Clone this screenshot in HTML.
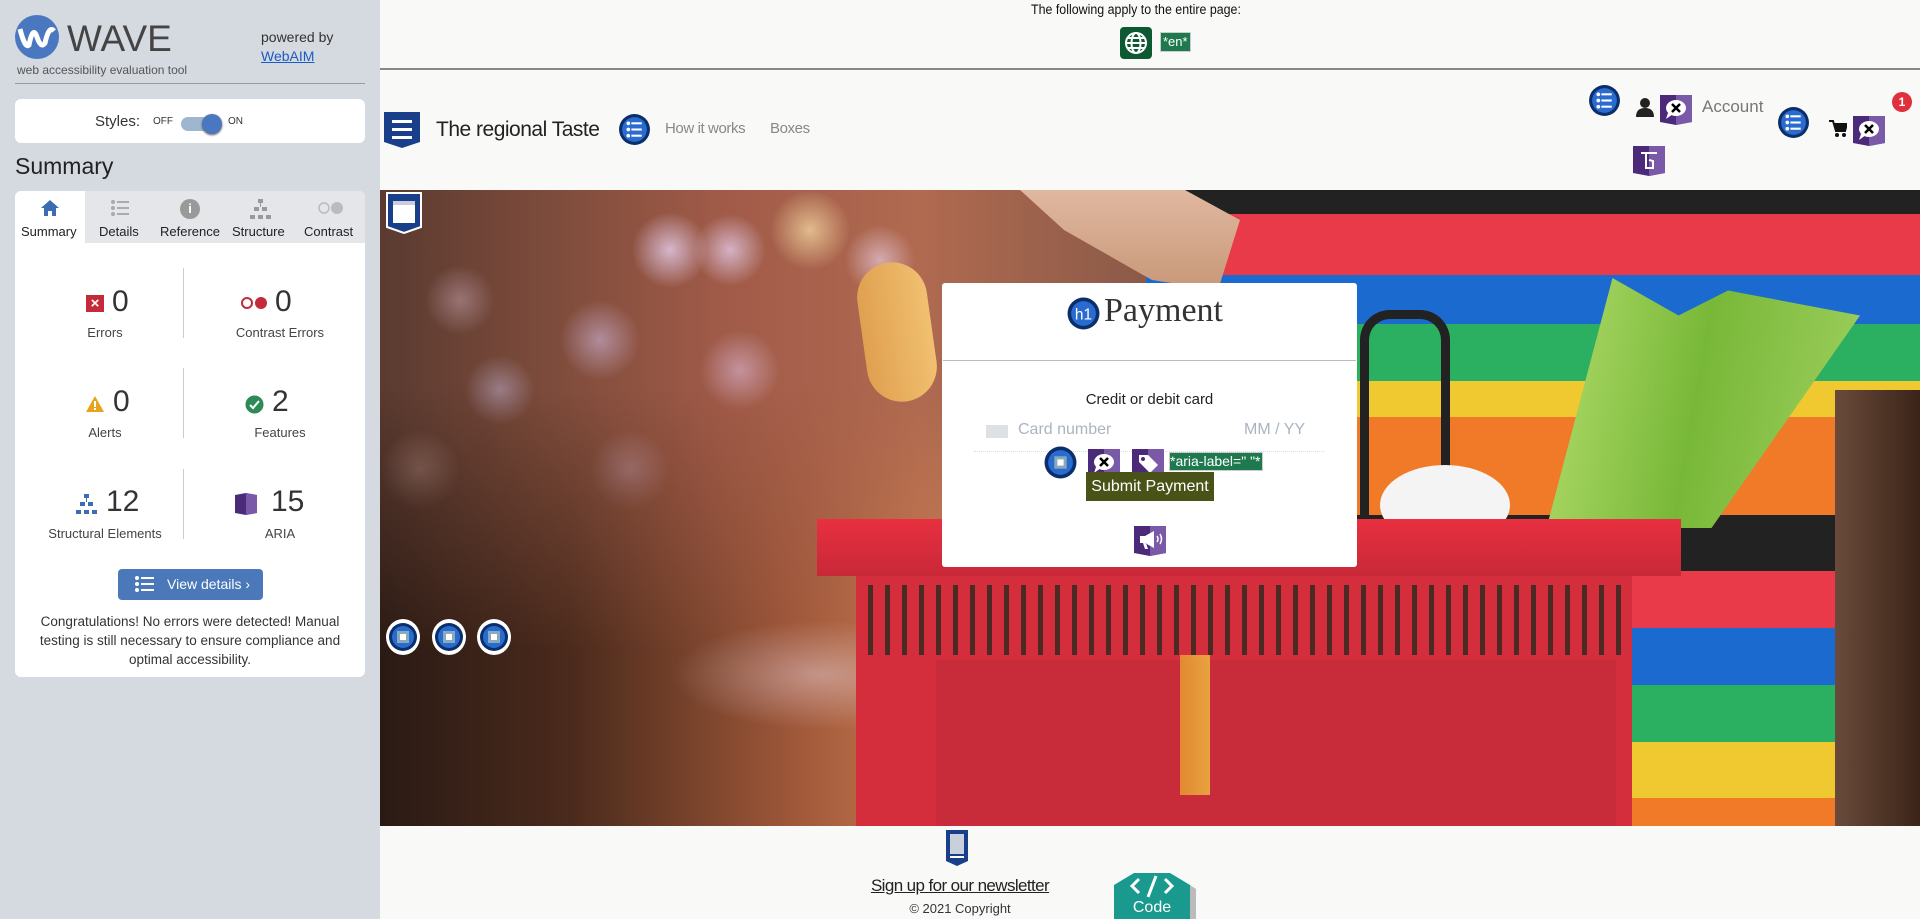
<!DOCTYPE html>
<html><head><meta charset="utf-8"><style>
*{margin:0;padding:0;box-sizing:border-box}
body{width:1920px;height:919px;overflow:hidden;position:relative;font-family:"Liberation Sans",sans-serif;background:#f9faf8}
.a{position:absolute}
#side{left:0;top:0;width:380px;height:919px;background:#d5d9e0;color:#333}
.c{text-align:center}
.lbl{font-size:13px;color:#444}
.num{font-size:30px;color:#333}
</style></head><body>
<div id="side" class="a">
  <svg class="a" style="left:15px;top:15px" width="44" height="44" viewBox="0 0 44 44"><circle cx="22" cy="22" r="22" fill="#4a78c0"/><path d="M5 14 Q10 34 14 30 Q18 10 22 22 Q26 34 30 28 Q34 10 39 16" fill="none" stroke="#fff" stroke-width="5"/></svg>
  <div class="a" style="left:67px;top:18px;font-size:37px;color:#444">WAVE</div>
  <div class="a" style="left:17px;top:63px;font-size:12px;color:#555">web accessibility evaluation tool</div>
  <div class="a" style="left:261px;top:29px;font-size:14px;color:#333">powered by</div>
  <div class="a" style="left:261px;top:48px;font-size:14px;color:#1a5bc4;text-decoration:underline">WebAIM</div>
  <div class="a" style="left:15px;top:83px;width:350px;height:1px;background:#999"></div>
  <div class="a" style="left:15px;top:99px;width:350px;height:44px;background:#fff;border-radius:6px"></div>
  <div class="a" style="left:95px;top:113px;font-size:15px">Styles:</div>
  <div class="a" style="left:153px;top:116px;font-size:10px">OFF</div>
  <div class="a" style="left:181px;top:117px;width:40px;height:14px;border-radius:7px;background:#9fb6cf"></div>
  <div class="a" style="left:202px;top:114px;width:20px;height:20px;border-radius:50%;background:#4a78c0;box-shadow:0 1px 2px #555"></div>
  <div class="a" style="left:228px;top:116px;font-size:10px">ON</div>
  <div class="a" style="left:15px;top:153px;font-size:23px;color:#222">Summary</div>
  <div class="a" style="left:15px;top:191px;width:350px;height:486px;background:#fff;border-radius:6px;overflow:hidden">
    <div class="a" style="left:70px;top:0;width:280px;height:52px;background:#e4e6ea"></div>
  </div>
  <svg class="a" style="left:40px;top:199px" width="20" height="18" viewBox="0 0 20 18"><path d="M10 1 L1 9 H4 V17 H8 V12 H12 V17 H16 V9 H19Z" fill="#3b6db5"/></svg>
  <svg class="a" style="left:110px;top:199px" width="20" height="18"><g fill="#aaa"><circle cx="3" cy="3" r="2"/><circle cx="3" cy="9" r="2"/><circle cx="3" cy="15" r="2"/><rect x="7" y="2" width="12" height="2"/><rect x="7" y="8" width="12" height="2"/><rect x="7" y="14" width="12" height="2"/></g></svg>
  <div class="a" style="left:180px;top:199px;width:20px;height:20px;border-radius:50%;background:#999;color:#fff;font-size:13px;text-align:center;line-height:20px;font-weight:bold">i</div>
  <svg class="a" style="left:250px;top:199px" width="21" height="20"><g fill="#999"><rect x="8" y="0" width="5" height="4"/><rect x="4" y="8" width="5" height="4"/><rect x="12" y="8" width="5" height="4"/><rect x="0" y="16" width="5" height="4"/><rect x="8" y="16" width="5" height="4"/><rect x="16" y="16" width="5" height="4"/><rect x="10" y="4" width="1" height="4"/></g></svg>
  <svg class="a" style="left:318px;top:201px" width="26" height="14"><circle cx="6" cy="7" r="5" fill="none" stroke="#bbb" stroke-width="1.5"/><circle cx="19" cy="7" r="6" fill="#bbb"/></svg>
  <div class="a lbl" style="left:21px;top:224px;color:#222">Summary</div>
  <div class="a lbl" style="left:99px;top:224px;color:#222">Details</div>
  <div class="a lbl" style="left:160px;top:224px;color:#222">Reference</div>
  <div class="a lbl" style="left:232px;top:224px;color:#222">Structure</div>
  <div class="a lbl" style="left:304px;top:224px;color:#222">Contrast</div>
  <div class="a" style="left:183px;top:268px;width:1px;height:70px;background:#ccc"></div>
  <div class="a" style="left:183px;top:368px;width:1px;height:70px;background:#ccc"></div>
  <div class="a" style="left:183px;top:469px;width:1px;height:70px;background:#ccc"></div>
  <div class="a" style="left:86px;top:295px;width:18px;height:17px;background:#c32b3a;color:#fff;font-size:15px;line-height:17px;text-align:center;font-weight:bold">×</div>
  <div class="a num" style="left:112px;top:285px">0</div>
  <div class="a lbl c" style="left:45px;top:325px;width:120px">Errors</div>
  <svg class="a" style="left:241px;top:296px" width="27" height="14"><circle cx="6" cy="7" r="5" fill="none" stroke="#c32b3a" stroke-width="2"/><circle cx="20" cy="7" r="6" fill="#c32b3a"/></svg>
  <div class="a num" style="left:275px;top:285px">0</div>
  <div class="a lbl c" style="left:205px;top:325px;width:150px">Contrast Errors</div>
  <svg class="a" style="left:85px;top:395px" width="20" height="18"><path d="M10 1 L19 17 H1Z" fill="#e8a21c"/><rect x="9" y="6" width="2" height="6" fill="#fff"/><rect x="9" y="13" width="2" height="2" fill="#fff"/></svg>
  <div class="a num" style="left:113px;top:385px">0</div>
  <div class="a lbl c" style="left:45px;top:425px;width:120px">Alerts</div>
  <svg class="a" style="left:245px;top:395px" width="19" height="19"><circle cx="9.5" cy="9.5" r="9" fill="#2d8a57"/><path d="M5 10 L8 13 L14 6" fill="none" stroke="#fff" stroke-width="2"/></svg>
  <div class="a num" style="left:272px;top:385px">2</div>
  <div class="a lbl c" style="left:205px;top:425px;width:150px">Features</div>
  <svg class="a" style="left:76px;top:494px" width="21" height="20"><g fill="#3b6db5"><rect x="8" y="0" width="5" height="4"/><rect x="4" y="8" width="5" height="4"/><rect x="12" y="8" width="5" height="4"/><rect x="0" y="16" width="5" height="4"/><rect x="8" y="16" width="5" height="4"/><rect x="16" y="16" width="5" height="4"/><rect x="10" y="4" width="1" height="4"/></g></svg>
  <div class="a num" style="left:106px;top:485px">12</div>
  <div class="a lbl c" style="left:30px;top:526px;width:150px">Structural Elements</div>
  <svg class="a" style="left:234px;top:492px" width="24" height="24"><path d="M1 3 L12 1 L23 3 V21 L12 23 L1 21Z" fill="#4b2a7a"/><path d="M12 1 L23 3 V21 L12 23Z" fill="#7a5aa8"/></svg>
  <div class="a num" style="left:271px;top:485px">15</div>
  <div class="a lbl c" style="left:205px;top:526px;width:150px">ARIA</div>
  <div class="a" style="left:118px;top:569px;width:145px;height:31px;background:#4a78b9;border-radius:4px"></div>
  <svg class="a" style="left:135px;top:576px" width="19" height="16"><g fill="#fff"><circle cx="2" cy="2" r="2"/><circle cx="2" cy="8" r="2"/><circle cx="2" cy="14" r="2"/><rect x="6" y="1" width="13" height="2"/><rect x="6" y="7" width="13" height="2"/><rect x="6" y="13" width="13" height="2"/></g></svg>
  <div class="a" style="left:167px;top:576px;font-size:14px;color:#fff">View details ›</div>
  <div class="a c" style="left:22px;top:612px;width:336px;font-size:13.5px;line-height:19px;color:#333">Congratulations! No errors were detected! Manual testing is still necessary to ensure compliance and optimal accessibility.</div>
</div>

<!-- top -->
<div class="a" style="left:1031px;top:2px;font-size:13.5px;color:#111;transform:scaleX(.92);transform-origin:0 0">The following apply to the entire page:</div>
<div class="a" style="left:1120px;top:27px;width:32px;height:32px;background:#0d5a32;border-radius:4px"></div>
<svg class="a" style="left:1124px;top:31px" width="24" height="24" viewBox="0 0 24 24" fill="none" stroke="#fff" stroke-width="2"><circle cx="12" cy="12" r="10"/><ellipse cx="12" cy="12" rx="4.5" ry="10"/><path d="M2 12 H22 M4 7 H20 M4 17 H20"/></svg>
<div class="a" style="left:1161px;top:33px;height:18px;padding:0 2px;background:#1e7a4e;color:#fff;font-size:13px;line-height:18px;outline:1px solid #ccc">*en*</div>
<div class="a" style="left:380px;top:68px;width:1540px;height:2px;background:#888"></div>

<!-- nav -->
<svg class="a" style="left:383px;top:111px" width="38" height="38" viewBox="0 0 38 38"><path d="M1 1 H37 V31 L19 37 L1 31Z" fill="#1a3f8a"/><rect x="9" y="9" width="20" height="3" fill="#fff"/><rect x="9" y="17" width="20" height="3" fill="#fff"/><rect x="9" y="25" width="20" height="3" fill="#fff"/></svg>
<div class="a" style="left:436px;top:118px;font-size:21px;color:#222;letter-spacing:-.5px">The regional Taste</div>
<svg class="a" style="left:618px;top:113px" width="33" height="33" viewBox="0 0 32 32"><circle cx="16" cy="16" r="15" fill="#0b2f6a"/><circle cx="16" cy="16" r="12" fill="#2a6bd0"/><g fill="#fff"><circle cx="10" cy="10" r="1.8"/><circle cx="10" cy="16" r="1.8"/><circle cx="10" cy="22" r="1.8"/><rect x="13" y="9" width="10" height="2"/><rect x="13" y="15" width="10" height="2"/><rect x="13" y="21" width="10" height="2"/></g></svg>
<div class="a" style="left:665px;top:120px;font-size:15px;color:#888;letter-spacing:-.4px">How it works</div>
<div class="a" style="left:770px;top:120px;font-size:15px;color:#888;letter-spacing:-.4px">Boxes</div>

<svg class="a" style="left:1588px;top:84px" width="33" height="33" viewBox="0 0 32 32"><circle cx="16" cy="16" r="15" fill="#0b2f6a"/><circle cx="16" cy="16" r="12" fill="#2a6bd0"/><g fill="#fff"><circle cx="10" cy="10" r="1.8"/><circle cx="10" cy="16" r="1.8"/><circle cx="10" cy="22" r="1.8"/><rect x="13" y="9" width="10" height="2"/><rect x="13" y="15" width="10" height="2"/><rect x="13" y="21" width="10" height="2"/></g></svg>
<svg class="a" style="left:1635px;top:97px" width="20" height="20"><circle cx="10" cy="6" r="5" fill="#222"/><path d="M1 20 Q1 11 10 11 Q19 11 19 20Z" fill="#222"/></svg>
<svg class="a" style="left:1660px;top:93px" width="32" height="32" viewBox="0 0 32 32"><path d="M0 2 H32 V29 L16 32 L0 29Z" fill="#4b2a7a"/><path d="M16 2 H32 V29 L16 32Z" fill="#7a5aa8"/><ellipse cx="16" cy="15" rx="10" ry="8" fill="#fff"/><path d="M8 20 L6 26 L13 21Z" fill="#fff"/><path d="M12 11 L20 19 M20 11 L12 19" stroke="#000" stroke-width="2.5"/></svg>
<div class="a" style="left:1702px;top:97px;font-size:17px;color:#777">Account</div>
<svg class="a" style="left:1633px;top:144px" width="32" height="32" viewBox="0 0 32 32"><path d="M0 2 H32 V29 L16 32 L0 29Z" fill="#4b2a7a"/><path d="M16 2 H32 V29 L16 32Z" fill="#7a5aa8"/><path d="M8 9 H24 M13 9 V16 M13 16 V24 L20 24 V17 L16 16" fill="none" stroke="#fff" stroke-width="2"/></svg>
<svg class="a" style="left:1777px;top:106px" width="33" height="33" viewBox="0 0 32 32"><circle cx="16" cy="16" r="15" fill="#0b2f6a"/><circle cx="16" cy="16" r="12" fill="#2a6bd0"/><g fill="#fff"><circle cx="10" cy="10" r="1.8"/><circle cx="10" cy="16" r="1.8"/><circle cx="10" cy="22" r="1.8"/><rect x="13" y="9" width="10" height="2"/><rect x="13" y="15" width="10" height="2"/><rect x="13" y="21" width="10" height="2"/></g></svg>
<svg class="a" style="left:1829px;top:120px" width="18" height="17"><path d="M0 1 H4 L7 11 H16 L18 4 H5" fill="none" stroke="#111" stroke-width="2"/><rect x="6" y="5" width="11" height="5" fill="#111"/><circle cx="8" cy="15" r="2" fill="#111"/><circle cx="15" cy="15" r="2" fill="#111"/></svg>
<svg class="a" style="left:1853px;top:114px" width="32" height="32" viewBox="0 0 32 32"><path d="M0 2 H32 V29 L16 32 L0 29Z" fill="#4b2a7a"/><path d="M16 2 H32 V29 L16 32Z" fill="#7a5aa8"/><ellipse cx="16" cy="15" rx="10" ry="8" fill="#fff"/><path d="M8 20 L6 26 L13 21Z" fill="#fff"/><path d="M12 11 L20 19 M20 11 L12 19" stroke="#000" stroke-width="2.5"/></svg>
<div class="a" style="left:1892px;top:92px;width:20px;height:20px;border-radius:50%;background:#e0303d;color:#fff;font-size:12px;font-weight:bold;text-align:center;line-height:20px">1</div>

<!-- hero -->
<div class="a" style="left:380px;top:190px;width:1540px;height:636px;overflow:hidden;background:linear-gradient(90deg,#5a3a30 0%,#7a4a3a 10%,#a05a48 22%,#b06a50 35%,#8a5a48 50%,#9a6a58 60%)">
  <div class="a" style="left:0;top:0;width:720px;height:500px;background:
    radial-gradient(circle at 290px 60px,rgba(235,215,250,.75) 0,transparent 38px),
    radial-gradient(circle at 350px 60px,rgba(235,215,250,.7) 0,transparent 36px),
    radial-gradient(circle at 430px 40px,rgba(250,225,170,.7) 0,transparent 40px),
    radial-gradient(circle at 500px 70px,rgba(240,215,240,.6) 0,transparent 35px),
    radial-gradient(circle at 220px 150px,rgba(210,190,230,.55) 0,transparent 40px),
    radial-gradient(circle at 80px 110px,rgba(220,190,210,.4) 0,transparent 35px),
    radial-gradient(circle at 120px 200px,rgba(200,190,230,.45) 0,transparent 35px),
    radial-gradient(circle at 360px 180px,rgba(230,200,240,.5) 0,transparent 40px),
    radial-gradient(circle at 40px 280px,rgba(230,190,180,.35) 0,transparent 40px),
    radial-gradient(circle at 250px 280px,rgba(220,190,220,.4) 0,transparent 40px)"></div>
  <div class="a" style="left:0;top:200px;width:760px;height:436px;background:linear-gradient(90deg,#2a1a14 0,#4a2a1c 25%,#a0583a 55%,#d88a5a 80%,rgba(220,140,90,0) 100%);-webkit-mask-image:linear-gradient(180deg,transparent 0,#000 60%);mask-image:linear-gradient(180deg,transparent 0,#000 60%)"></div>
  <div class="a" style="left:290px;top:430px;width:300px;height:110px;background:radial-gradient(ellipse,rgba(235,215,225,.45),transparent 70%)"></div>
  <!-- shirt stripes -->
  <div class="a" style="left:766px;top:0;width:774px;height:636px;background:linear-gradient(180deg,#222 0 24px,#e83a48 24px 85px,#1a6ad0 85px 134px,#2ab060 134px 191px,#f0c830 191px 227px,#f07a28 227px 325px,#222 325px 381px,#e83a48 381px 438px,#1a6ad0 438px 495px,#2ab060 495px 552px,#f0c830 552px 608px,#f07a28 608px 636px)"></div>
  <!-- arm -->
  <div class="a" style="left:640px;top:0;width:220px;height:100px;background:linear-gradient(180deg,#e0b8a0,#c89878);clip-path:polygon(0 0,75% 0,100% 30%,90% 100%,60% 90%,20% 40%)"></div>
  <div class="a" style="left:1455px;top:200px;width:85px;height:436px;background:linear-gradient(90deg,#6a4a3a,#3a2418)"></div>
  <!-- bread -->
  <div class="a" style="left:482px;top:72px;width:70px;height:140px;border-radius:35px;background:linear-gradient(90deg,#e0a050,#f0c070);transform:rotate(-8deg)"></div>
  <!-- handle -->
  <div class="a" style="left:980px;top:120px;width:90px;height:210px;border:9px solid #222;border-bottom:none;border-radius:30px 30px 0 0"></div>
  <div class="a" style="left:1000px;top:275px;width:130px;height:80px;border-radius:50%;background:#f4f4f4"></div>
  <!-- celery -->
  <div class="a" style="left:1150px;top:88px;width:330px;height:250px;background:linear-gradient(100deg,#b8e070,#78b838 50%,#a0d060);clip-path:polygon(25% 0,45% 15%,60% 5%,100% 15%,55% 100%,5% 100%)"></div>
  <!-- basket -->
  <div class="a" style="left:437px;top:329px;width:864px;height:57px;background:linear-gradient(180deg,#e83040,#c82838)"></div>
  <div class="a" style="left:476px;top:386px;width:776px;height:250px;background:#d42e3c"></div>
  <div class="a" style="left:476px;top:395px;width:776px;height:70px;background:repeating-linear-gradient(90deg,#d42e3c 0 12px,#4a2a22 12px 17px)"></div>
  <div class="a" style="left:556px;top:470px;width:680px;height:166px;background:#c82c3a"></div>
  <div class="a" style="left:800px;top:465px;width:30px;height:140px;background:linear-gradient(90deg,#e8a030,#f0c040);opacity:.8"></div>
</div>
<svg class="a" style="left:386px;top:192px" width="36" height="42" viewBox="0 0 36 42"><path d="M1 1 H35 V35 L18 41 L1 35Z" fill="#1a3f8a" stroke="#fff" stroke-width="2"/><rect x="7" y="9" width="22" height="22" fill="#fff"/><rect x="7" y="9" width="22" height="4" fill="#ccd"/></svg>
<svg class="a" style="left:385px;top:619px" width="148" height="37"><g><ellipse cx="18" cy="18" rx="17" ry="18" fill="#fff"/><circle cx="18" cy="18" r="14" fill="#0b2f6a"/><circle cx="18" cy="18" r="11" fill="#2a6bd0"/><rect x="12" y="12" width="12" height="12" fill="#8ab"/><rect x="15" y="15" width="6" height="6" fill="#fff"/></g><g transform="translate(46 0)"><ellipse cx="18" cy="18" rx="17" ry="18" fill="#fff"/><circle cx="18" cy="18" r="14" fill="#0b2f6a"/><circle cx="18" cy="18" r="11" fill="#2a6bd0"/><rect x="12" y="12" width="12" height="12" fill="#8ab"/><rect x="15" y="15" width="6" height="6" fill="#fff"/></g><g transform="translate(91 0)"><ellipse cx="18" cy="18" rx="17" ry="18" fill="#fff"/><circle cx="18" cy="18" r="14" fill="#0b2f6a"/><circle cx="18" cy="18" r="11" fill="#2a6bd0"/><rect x="12" y="12" width="12" height="12" fill="#8ab"/><rect x="15" y="15" width="6" height="6" fill="#fff"/></g></svg>

<!-- card -->
<div class="a" style="left:942px;top:283px;width:415px;height:284px;background:#fff;border-radius:3px"></div>
<div class="a" style="left:943px;top:360px;width:413px;height:1px;background:#bbb"></div>
<svg class="a" style="left:1067px;top:297px" width="33" height="33" viewBox="0 0 32 32"><circle cx="16" cy="16" r="15.5" fill="#0b2f6a"/><circle cx="16" cy="16" r="12" fill="#2a6bd0"/><text x="16" y="22" fill="#fff" font-size="15" text-anchor="middle" font-family="Liberation Sans">h1</text></svg>
<div class="a" style="left:1104px;top:292px;font-family:'Liberation Serif',serif;font-size:34px;color:#333">Payment</div>
<div class="a c" style="left:942px;top:391px;width:415px;font-size:15px;color:#222">Credit or debit card</div>
<div class="a" style="left:986px;top:425px;width:22px;height:13px;background:#dde0e4"></div>
<div class="a" style="left:1018px;top:421px;font-size:16px;color:#aab4c0">Card number</div>
<div class="a" style="left:1244px;top:421px;font-size:16px;color:#aab4c0">MM / YY</div>
<div class="a" style="left:974px;top:451px;width:350px;border-top:1px dotted #ddd"></div>
<svg class="a" style="left:1044px;top:446px" width="33" height="33" viewBox="0 0 32 32"><circle cx="16" cy="16" r="15.5" fill="#0b2f6a"/><circle cx="16" cy="16" r="12" fill="#2a6bd0"/><rect x="10" y="10" width="12" height="12" fill="#8ab"/><rect x="13" y="13" width="6" height="6" fill="#fff"/></svg>
<svg class="a" style="left:1088px;top:447px" width="32" height="32" viewBox="0 0 32 32"><path d="M0 2 H32 V29 L16 32 L0 29Z" fill="#4b2a7a"/><path d="M16 2 H32 V29 L16 32Z" fill="#7a5aa8"/><ellipse cx="16" cy="15" rx="10" ry="8" fill="#fff"/><path d="M8 20 L6 26 L13 21Z" fill="#fff"/><path d="M12 11 L20 19 M20 11 L12 19" stroke="#000" stroke-width="2.5"/></svg>
<svg class="a" style="left:1132px;top:447px" width="32" height="32" viewBox="0 0 32 32"><path d="M0 2 H32 V29 L16 32 L0 29Z" fill="#4b2a7a"/><path d="M16 2 H32 V29 L16 32Z" fill="#7a5aa8"/><path d="M7 8 H16 L26 18 L18 26 L7 15Z" fill="#fff"/><circle cx="11" cy="12" r="2" fill="#4b2a7a"/></svg>
<div class="a" style="left:1170px;top:453px;width:92px;height:17px;background:#1e7a4e;color:#fff;font-size:14px;line-height:17px;outline:1px solid #ccc;white-space:nowrap;overflow:hidden">*aria-label=" "*</div>
<div class="a" style="left:1086px;top:472px;width:128px;height:29px;background:#4a5317;color:#fff;font-size:16px;line-height:29px;text-align:center">Submit Payment</div>
<svg class="a" style="left:1134px;top:524px" width="32" height="32" viewBox="0 0 32 32"><path d="M0 2 H32 V29 L16 32 L0 29Z" fill="#4b2a7a"/><path d="M16 2 H32 V29 L16 32Z" fill="#7a5aa8"/><path d="M6 12 H11 L20 7 V24 L11 19 H6Z M9 19 L11 25 H14 L12 19" fill="#fff"/><path d="M23 12 Q25 15 23 18 M26 10 Q29 15 26 20" fill="none" stroke="#fff" stroke-width="1.5"/></svg>

<!-- footer -->
<svg class="a" style="left:946px;top:830px" width="22" height="36" viewBox="0 0 22 36"><path d="M0 0 H22 V31 L11 36 L0 31Z" fill="#1a3f8a"/><rect x="4" y="4" width="14" height="20" fill="#c8d0dc"/><rect x="4" y="26" width="14" height="2" fill="#fff"/></svg>
<div class="a c" style="left:820px;top:876px;width:280px;font-size:17px;color:#222;text-decoration:underline;letter-spacing:-.6px">Sign up for our newsletter</div>
<div class="a c" style="left:860px;top:901px;width:200px;font-size:13px;color:#333">© 2021 Copyright</div>
<svg class="a" style="left:1114px;top:873px" width="94" height="46" viewBox="0 0 94 46"><path d="M0 12 L20 0 H56 L76 12 V46 H0Z" fill="#1a9a8e"/><path d="M76 12 L82 16 V46 H76Z" fill="#bbb"/><path d="M25 6 L18 13 L25 20 M51 6 L58 13 L51 20 M42 3 L34 24" fill="none" stroke="#fff" stroke-width="3"/></svg>
<div class="a c" style="left:1114px;top:899px;width:76px;font-size:16px;color:#fff">Code</div>
</body></html>
